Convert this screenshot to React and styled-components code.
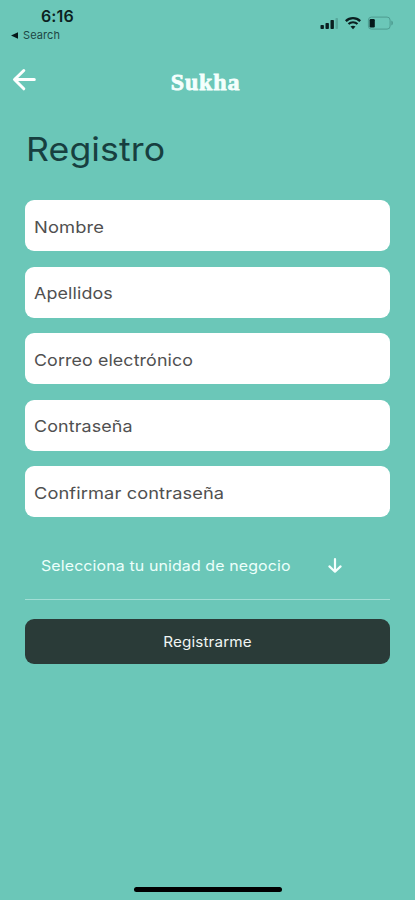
import React, { useState } from 'react';
import styled, { createGlobalStyle } from 'styled-components';

const GlobalStyle = createGlobalStyle`
	* {
		box-sizing: border-box;
	}

	body {
		margin: 0;
		background-color: #6bc7b8;
		font-family: Inter, 'Open Sans', sans-serif;
	}
`;

const Screen = styled.div`
	display: flex;
	flex-direction: column;
	width: 415px;
	height: 900px;
	overflow: hidden;
	background-color: #6bc7b8;
`;

const StatusBar = styled.div`
	display: flex;
	justify-content: space-between;
	height: 56px;
	padding: 7px 21px 0 11px;
	color: #0b1f20;
`;

const Time = styled.div`
	padding-left: 30px;
	font-size: 16px;
	line-height: 19px;
	font-weight: 600;
	letter-spacing: 0.1px;
`;

const BackToSearch = styled.div`
	display: flex;
	align-items: center;
	gap: 4px;
	margin-top: 2px;
	font-size: 11px;
	line-height: 14px;
	letter-spacing: 0.1px;
	color: #1d4644;
`;

const StatusIcons = styled.div`
	display: flex;
	align-items: flex-start;
	gap: 6px;
	padding-top: 9px;
`;

const Header = styled.header`
	display: grid;
	grid-template-columns: 60px 1fr 60px;
	height: 50px;
`;

const BackBtn = styled.button`
	display: flex;
	padding: 12px 0 0 12px;
	border: none;
	background: none;
	cursor: pointer;
`;

const Logo = styled.div`
	padding-top: 12px;
	padding-right: 4px;
	text-align: center;
	font-family: 'Liberation Serif', serif;
	font-size: 24px;
	line-height: 28px;
	font-weight: 700;
	letter-spacing: 0.8px;
	color: #f4fffd;
	-webkit-text-stroke: 0.8px #f4fffd;
`;

const Form = styled.form`
	display: flex;
	flex-direction: column;
	padding: 23px 25px 0;
`;

/* Inter is narrower than the brand type, so every label is stretched a bit */
const WideText = styled.span`
	display: inline-block;
	white-space: nowrap;
	letter-spacing: 0.1px;
	transform: scaleX(${({ $stretch }) => $stretch});
	transform-origin: ${({ $origin }) => $origin || 'left'} center;
`;

const Heading = styled.h1`
	margin: 0 0 31px 1px;
	font-size: 33px;
	line-height: 40px;
	font-weight: 400;
	color: #173f40;
`;

const Fields = styled.div`
	display: flex;
	flex-direction: column;
	gap: 15.6px;
`;

const Field = styled.label`
	display: flex;
	align-items: center;
	height: 51px;
	padding: 2px 9px 0;
	border-radius: 9px;
	background-color: #ffffff;
	font-size: 16.5px;
	color: #505050;
	cursor: text;
`;

const Input = styled.input`
	flex: 1;
	min-width: 0;
	padding: 0;
	border: none;
	outline: none;
	background: none;
	font-family: inherit;
	font-size: inherit;
	color: inherit;
`;

const Select = styled.div`
	display: flex;
	align-items: center;
	justify-content: space-between;
	height: 83px;
	padding: 14px 47px 0 16px;
	border-bottom: 1px solid #a2ded5;
	font-size: 14.5px;
	color: #ecfffb;
	cursor: pointer;
`;

const SubmitBtn = styled.button`
	height: 45px;
	margin-top: 19px;
	padding: 0;
	border: none;
	border-radius: 9px;
	background-color: #2a3b38;
	font-family: inherit;
	font-size: 14px;
	color: #f0f5f3;
	cursor: pointer;
`;

const HomeIndicator = styled.div`
	width: 148px;
	height: 5px;
	margin: auto auto 8px 134px;
	border-radius: 3px;
	background-color: #000000;
`;

const fields = [
	{ name: 'nombre', label: 'Nombre', stretch: 1.11 },
	{ name: 'apellidos', label: 'Apellidos', stretch: 1.085 },
	{ name: 'correo', label: 'Correo electrónico', stretch: 1.08 },
	{ name: 'password', label: 'Contraseña', stretch: 1.085, type: 'password' },
	{ name: 'confirm', label: 'Confirmar contraseña', stretch: 1.105, type: 'password' },
];

const SignalIcon = () => (
	<svg width='19' height='14' viewBox='0 0 19 14'>
		<rect x='0.5' y='9' width='3.4' height='4' rx='0.8' fill='#0b1f20' />
		<rect x='5.5' y='7' width='3.4' height='6' rx='0.8' fill='#0b1f20' />
		<rect x='10.5' y='4' width='3.4' height='9' rx='0.8' fill='#0b1f20' />
		<rect x='15.5' y='2' width='2.5' height='11' rx='0.8' fill='#57a89c' />
	</svg>
);

const WifiIcon = () => (
	<svg width='16' height='14' viewBox='0 0 16 14' fill='none' stroke='#0b1f20'>
		<path d='M0.8 5.1C4.8 1.1 11.2 1.1 15.2 5.1' strokeWidth='2.4' />
		<path d='M3.5 8.1C6 5.6 10 5.6 12.5 8.1' strokeWidth='2.1' />
		<path d='M8 13.2L5.5 10.6C6.9 9.3 9.1 9.3 10.5 10.6Z' fill='#0b1f20' stroke='none' />
	</svg>
);

const BatteryIcon = () => (
	<svg width='27' height='14' viewBox='0 0 27 14'>
		<rect x='1.4' y='1.1' width='21.7' height='12' rx='3' fill='none' stroke='#4e9c91' />
		<rect x='2.6' y='3' width='5.2' height='8.4' rx='1.2' fill='#06191a' />
		<path d='M24.3 4.6C26.5 5.6 26.5 8.6 24.3 9.6Z' fill='#4e9c91' />
	</svg>
);

const App = () => {
	const [values, setValues] = useState({});

	const onChange = (e) => {
		setValues({ ...values, [e.target.name]: e.target.value });
	};

	const onFormSubmit = (e) => {
		e.preventDefault();
	};

	return (
		<>
			<GlobalStyle />
			<Screen>
				<StatusBar>
					<div>
						<Time>6:16</Time>
						<BackToSearch>
							<svg width='8' height='7' viewBox='0 0 8 7'>
								<path d='M0 3.5L7 0.3V6.7Z' fill='#06191a' />
							</svg>
							Search
						</BackToSearch>
					</div>
					<StatusIcons>
						<SignalIcon />
						<WifiIcon />
						<BatteryIcon />
					</StatusIcons>
				</StatusBar>
				<Header>
					<BackBtn type='button' aria-label='Volver'>
						<svg
							width='25'
							height='24'
							viewBox='0 0 25 24'
							fill='none'
							stroke='#ffffff'
							strokeWidth='3'
							strokeLinecap='round'
							strokeLinejoin='round'
						>
							<path d='M22.3 11.5H3M11.8 2.5L2.5 11.5L11.8 20.8' />
						</svg>
					</BackBtn>
					<Logo>Sukha</Logo>
				</Header>
				<Form onSubmit={onFormSubmit}>
					<Heading>
						<WideText $stretch={1.08}>Registro</WideText>
					</Heading>
					<Fields>
						{fields.map(({ name, label, stretch, type }) => (
							<Field key={name}>
								{!values[name] && <WideText $stretch={stretch}>{label}</WideText>}
								<Input
									type={type || 'text'}
									name={name}
									aria-label={label}
									value={values[name] || ''}
									onChange={onChange}
								/>
							</Field>
						))}
					</Fields>
					<Select>
						<WideText $stretch={1.1}>Selecciona tu unidad de negocio</WideText>
						<svg
							width='16'
							height='18'
							viewBox='0 0 16 18'
							fill='none'
							stroke='#f4fffd'
							strokeWidth='2.2'
							strokeLinecap='round'
							strokeLinejoin='round'
						>
							<path d='M8 3V15.5M2.4 10.4L8 15.7L13.6 10.4' />
						</svg>
					</Select>
					<SubmitBtn type='submit'>
						<WideText $stretch={1.09} $origin='center'>
							Registrarme
						</WideText>
					</SubmitBtn>
				</Form>
				<HomeIndicator />
			</Screen>
		</>
	);
};

export default App;
